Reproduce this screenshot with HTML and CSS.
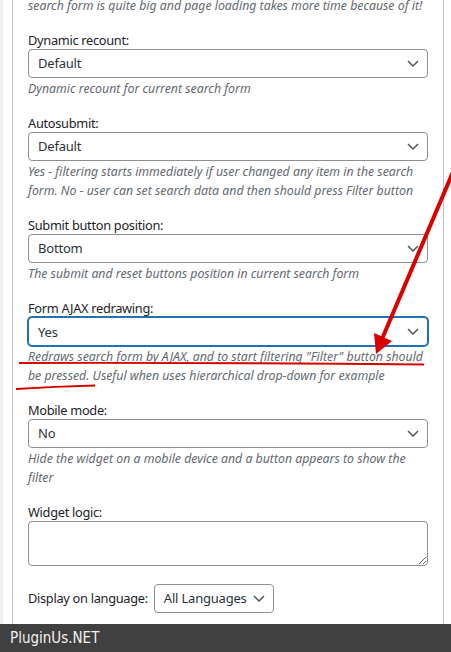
FILE: index.html
```html
<!DOCTYPE html>
<html>
<head>
<meta charset="utf-8">
<link rel="stylesheet" href="styles.css">
</head>
<body>
<div class="screen">
  <div class="main">
    <div class="gutter"></div>
    <div class="widget">
      <p class="desc first">search form is quite big and page loading takes more time because of it!</p>

      <div class="field">
        <div class="label">Dynamic recount:</div>
        <div class="select"><span>Default</span><svg class="chev" width="12" height="7" viewBox="0 0 12 7"><path d="M1 1L6 6L11 1"/></svg></div>
        <p class="desc">Dynamic recount for current search form</p>
      </div>

      <div class="field">
        <div class="label">Autosubmit:</div>
        <div class="select"><span>Default</span><svg class="chev" width="12" height="7" viewBox="0 0 12 7"><path d="M1 1L6 6L11 1"/></svg></div>
        <p class="desc">Yes - filtering starts immediately if user changed any item in the search form. No - user can set search data and then should press Filter button</p>
      </div>

      <div class="field">
        <div class="label">Submit button position:</div>
        <div class="select"><span>Bottom</span><svg class="chev" width="12" height="7" viewBox="0 0 12 7"><path d="M1 1L6 6L11 1"/></svg></div>
        <p class="desc">The submit and reset buttons position in current search form</p>
      </div>

      <div class="field">
        <div class="label">Form AJAX redrawing:</div>
        <div class="select focus"><span>Yes</span><svg class="chev" width="12" height="7" viewBox="0 0 12 7"><path d="M1 1L6 6L11 1"/></svg></div>
        <p class="desc">Redraws search form by AJAX, and to start filtering "Filter" button should<br>be pressed. Useful when uses hierarchical drop-down for example</p>
      </div>

      <div class="field">
        <div class="label">Mobile mode:</div>
        <div class="select"><span>No</span><svg class="chev" width="12" height="7" viewBox="0 0 12 7"><path d="M1 1L6 6L11 1"/></svg></div>
        <p class="desc">Hide the widget on a mobile device and a button appears to show the filter</p>
      </div>

      <div class="field">
        <div class="label">Widget logic:</div>
        <textarea class="logic"></textarea>
      </div>

      <div class="lang-row">
        <span class="label inline">Display on language:</span>
        <div class="select small"><span>All Languages</span><svg class="chev" width="12" height="7" viewBox="0 0 12 7"><path d="M1 1L6 6L11 1"/></svg></div>
      </div>
    </div>
  </div>
  <footer class="footer">PluginUs.NET</footer>

  <svg class="annot" width="451" height="652" viewBox="0 0 451 652">
    <line x1="453" y1="172" x2="382" y2="339" class="arrow-line"/>
    <polygon points="376,354 392,341 374,333" class="arrow-head"/>
    <path d="M19 363 Q220 362.5 424 364.5" class="uline"/>
    <path d="M16 389 Q55 386.5 95 385.5" class="uline"/>
  </svg>
</div>
</body>
</html>
```

FILE: styles.css
```css
* { box-sizing: border-box; }
html, body { margin: 0; padding: 0; }
body {
  background: #fff;
  font-family: "Noto Sans", "Open Sans", sans-serif;
  color: #1d2327;
  width: 451px;
  height: 652px;
  overflow: hidden;
}
.screen {
  position: relative;
  width: 451px;
  height: 652px;
  display: flex;
  flex-direction: column;
}
.main {
  flex: 1;
  display: flex;
  overflow: hidden;
}
.gutter {
  width: 3px;
  background: #f0f0f1;
  margin-right: 9px;
}
.widget {
  width: 432px;
  border-left: 1px solid #c3c4c7;
  border-right: 1px solid #c3c4c7;
  padding: 0 15px;
}
.desc {
  margin: 2px 0 0;
  font-size: 12.3px;
  line-height: 18.7px;
  font-style: italic;
  color: #646970;
}
.desc.first { margin-top: -3.5px; white-space: nowrap; }
.field { margin-top: 15.5px; }
.label {
  font-size: 12.8px;
  letter-spacing: -0.3px;
  line-height: 18px;
  color: #1d2327;
}
.select {
  height: 29px;
  border: 1px solid #8c8f94;
  border-radius: 4px;
  display: flex;
  align-items: center;
  justify-content: space-between;
  padding: 0 8px 0 9px;
  font-size: 13px;
  letter-spacing: -0.2px;
  color: #2c3338;
  background: #fff;
}
.select.focus {
  border-color: #2271b1;
  box-shadow: 0 0 0 1px #2271b1;
}
.chev path {
  fill: none;
  stroke: #50575e;
  stroke-width: 1.5;
}
.logic {
  display: block;
  width: 400px;
  height: 45px;
  border: 1px solid #8c8f94;
  border-radius: 4px;
  margin: 0;
  resize: vertical;
  background: #fff;
}
.lang-row {
  margin-top: 18px;
  display: flex;
  align-items: center;
  gap: 6px;
}
.label.inline { line-height: 29px; }
.select.small { width: 120px; }
.footer {
  height: 28px;
  flex: none;
  background: #404040;
  color: #f2f2f2;
  font-family: "DejaVu Sans Condensed", "DejaVu Sans", sans-serif;
  font-stretch: condensed;
  font-size: 15px;
  line-height: 28px;
  padding-left: 10px;
}
.annot {
  position: absolute;
  left: 0;
  top: 0;
  pointer-events: none;
}
.arrow-line {
  stroke: #d90000;
  stroke-width: 4;
}
.arrow-head { fill: #d90000; }
.uline {
  fill: none;
  stroke: #d40000;
  stroke-width: 1.8;
}
```
